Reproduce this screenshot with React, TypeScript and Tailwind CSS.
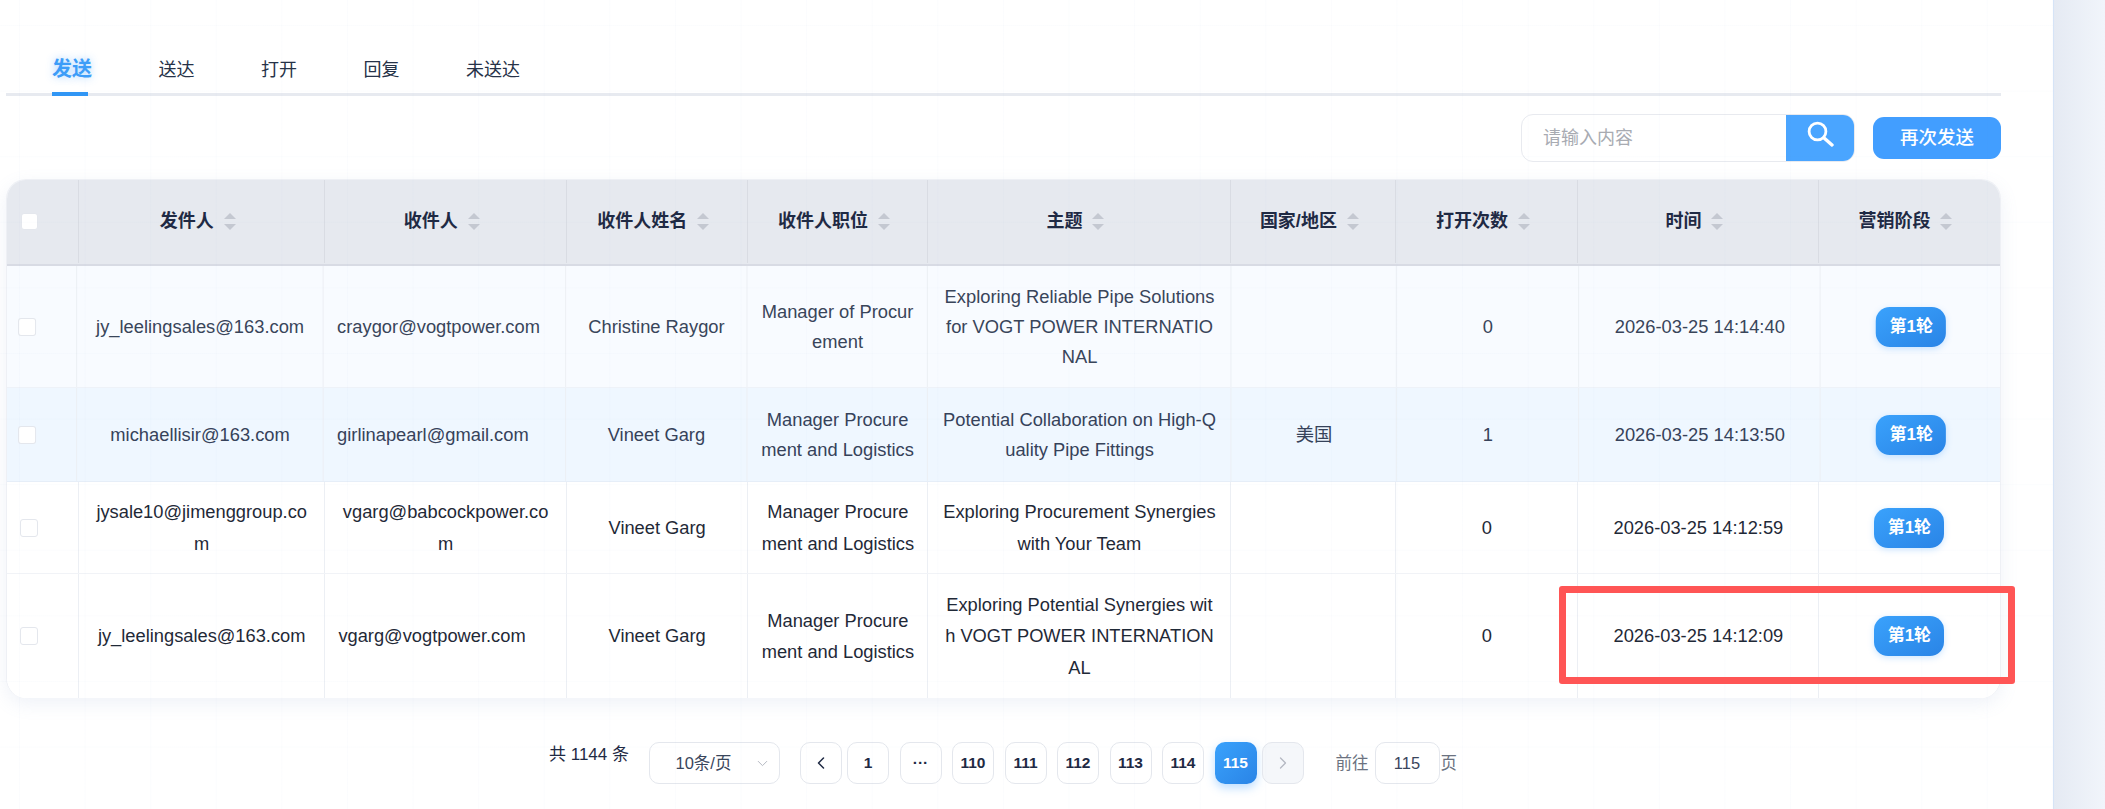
import type { ReactNode } from "react";
import { ChevronDown, ChevronLeft, ChevronRight } from "lucide-react";

const tabs = ["发送", "送达", "打开", "回复", "未送达"];

const columns = ["发件人", "收件人", "收件人姓名", "收件人职位", "主题", "国家/地区", "打开次数", "时间", "营销阶段"];

const gridCols = "grid grid-cols-[71px_246.4px_241.5px_181.5px_180px_303px_165px_182px_241px_181px]";

const rows = [
  {
    sender: "jy_leelingsales@163.com",
    to: "craygor@vogtpower.com",
    name: "Christine Raygor",
    title: "Manager of Procurement",
    subject: "Exploring Reliable Pipe Solutions for VOGT POWER INTERNATIONAL",
    country: "",
    opens: "0",
    time: "2026-03-25 14:14:40",
    cls: "h-[122px] leading-[30px] bg-[#f8fbff] text-[#39455a] scale-x-[1.002] border-b border-[#eef2f8]",
  },
  {
    sender: "michaellisir@163.com",
    to: "girlinapearl@gmail.com",
    name: "Vineet Garg",
    title: "Manager Procurement and Logistics",
    subject: "Potential Collaboration on High-Quality Pipe Fittings",
    country: "美国",
    opens: "1",
    time: "2026-03-25 14:13:50",
    cls: "h-[94px] leading-[30px] bg-[#eff7ff] text-[#36425a] scale-x-[1.002] border-b border-[#e6eef8]",
  },
  {
    sender: "jysale10@jimenggroup.com",
    to: "vgarg@babcockpower.com",
    name: "Vineet Garg",
    title: "Manager Procurement and Logistics",
    subject: "Exploring Procurement Synergies with Your Team",
    country: "",
    opens: "0",
    time: "2026-03-25 14:12:59",
    cls: "h-[92px] leading-[31.4px] bg-white text-[#1f2937] border-b border-[#f1f3f7]",
  },
  {
    sender: "jy_leelingsales@163.com",
    to: "vgarg@vogtpower.com",
    name: "Vineet Garg",
    title: "Manager Procurement and Logistics",
    subject: "Exploring Potential Synergies with VOGT POWER INTERNATIONAL",
    country: "",
    opens: "0",
    time: "2026-03-25 14:12:09",
    cls: "h-[124px] leading-[31.4px] bg-white text-[#1f2937]",
  },
];

const pagerBtn =
  "flex h-[42px] w-[42px] items-center justify-center rounded-[10px] border border-[#e4e7ed] bg-white text-[15.5px] font-bold text-[#1f2a44]";

const SortIcon = () => (
  <span className="ml-[10px] flex flex-col gap-[5px]">
    <span className="h-0 w-0 border-x-[6px] border-b-[6px] border-x-transparent border-b-[#c4c8d1]" />
    <span className="h-0 w-0 border-x-[6px] border-t-[6px] border-x-transparent border-t-[#c4c8d1]" />
  </span>
);

const Cell = ({ children, className = "justify-center px-[14px]" }: { children?: ReactNode; className?: string }) => (
  <div className={`flex items-center border-l border-[#eceff4] text-center break-all ${className}`}>
    <div>{children}</div>
  </div>
);

export default function App() {
  return (
    <div className="flex h-[809px] w-[2105px] overflow-hidden bg-white font-['Liberation_Sans','Noto_Sans_CJK_SC',sans-serif] text-[#1f2937]">
      <main className="relative h-full w-[2053px] pl-[6px] pr-[52px] pt-[48px]">
        {/* tabs */}
        <div className="flex h-[48px] items-start gap-[66.5px] border-b-[3px] border-[#e7eaf0] pl-[46px]">
          {tabs.map((t, i) =>
            i === 0 ? (
              <div
                key={t}
                className="relative mr-[4px] h-[45px] w-[36px] whitespace-nowrap pt-[7px] text-[20px] font-bold leading-[28px] text-[#3d9df8] [text-shadow:0_0_8px_rgba(64,158,255,0.45)]"
              >
                {t}
                <span className="absolute bottom-[-3px] left-0 h-[4px] w-[36px] bg-[#3096f5]" />
              </div>
            ) : (
              <div key={t} className="pt-[9px] text-[18px] leading-[26px] text-[#263248]">
                {t}
              </div>
            )
          )}
        </div>

        {/* toolbar */}
        <div className="mt-[18px] flex items-center justify-end">
          <div className="flex h-[48px] w-[334px] overflow-hidden rounded-[12px] border border-[#e8eaef] bg-white">
            <div className="flex-1 pl-[21px] text-[18px] leading-[46px] text-[#a8abb2]">请输入内容</div>
            <button className="flex w-[68px] items-center justify-center bg-[#4aa5ff] pb-[7px]">
              <svg width="27" height="27" viewBox="0 0 27 27" fill="none" stroke="white">
                <circle cx="10.5" cy="10.5" r="8.4" strokeWidth="2.8" />
                <path d="M16.8 16.8 L25 24" strokeWidth="3.4" strokeLinecap="round" />
              </svg>
            </button>
          </div>
          <button className="ml-[18px] h-[42px] w-[128px] rounded-[11px] bg-[#429eff] text-[18.5px] font-medium text-white">
            再次发送
          </button>
        </div>

        {/* table */}
        <div className="mt-[17px] overflow-hidden rounded-[20px] border-x border-t border-[#eef0f5] bg-white text-[18.3px] shadow-[0_6px_18px_rgba(120,150,200,0.12)]">
          <div className={`${gridCols} h-[86px] border-b-[2px] border-[#d8dbe4] bg-[#e6e9ef] pb-[1px]`}>
            <div className="flex items-center pl-[14px]">
              <span className="h-[17px] w-[17px] rounded-[3px] border border-[#e4e7ed] bg-white" />
            </div>
            {columns.map((c) => (
              <div key={c} className="flex items-center justify-center border-l border-[#d9dce3] pr-[8px]">
                <span className="whitespace-nowrap text-[18px] font-bold text-[#1f2a44]">{c}</span>
                <SortIcon />
              </div>
            ))}
          </div>
          {rows.map((r) => (
            <div key={r.time} className={`${gridCols} ${r.cls}`}>
              <div className="flex items-center pl-[13px]">
                <span className="h-[18px] w-[18px] rounded-[3px] border border-[#e4e7ed] bg-white" />
              </div>
              <Cell>{r.sender}</Cell>
              <Cell className="justify-start px-[13px]">{r.to}</Cell>
              <Cell>{r.name}</Cell>
              <Cell className="justify-center px-[12px]">{r.title}</Cell>
              <Cell className="justify-center px-[13.5px]">{r.subject}</Cell>
              <Cell>{r.country}</Cell>
              <Cell>{r.opens}</Cell>
              <Cell>{r.time}</Cell>
              <div className="flex items-center justify-center border-l border-[#eceff4]">
                <span className="flex h-[40px] w-[70px] items-center justify-center rounded-[14px] bg-linear-to-br from-[#3aa2fc] to-[#2a84e6] text-[17px] font-bold text-white shadow-[0_2px_6px_rgba(64,158,255,0.25)]">
                  第1轮
                </span>
              </div>
            </div>
          ))}
        </div>

        {/* pagination */}
        <div className="mt-[44px] flex items-start pl-[543px] text-[#1f2a44]">
          <span className="mt-[1px] w-[80px] whitespace-nowrap text-[17px] leading-[24px]">共 1144 条</span>
          <div className="ml-[19.5px] flex h-[42px] w-[131.5px] items-center justify-between rounded-[10px] border border-[#e4e7ed] pl-[26px] pr-[8px] text-[16.5px] text-[#3a465c]">
            10条/页
            <ChevronDown size={17} strokeWidth={1.4} className="text-[#b4b8c1]" />
          </div>
          <div className="ml-[20px] flex items-center">
            <div className={pagerBtn}>
              <ChevronLeft size={20} strokeWidth={1.8} />
            </div>
            <div className={`${pagerBtn} ml-[5px]`}>1</div>
            <div className={`${pagerBtn} ml-[10.5px]`}>···</div>
            {["110", "111", "112", "113", "114"].map((p) => (
              <div key={p} className={`${pagerBtn} ml-[10.5px]`}>
                {p}
              </div>
            ))}
            <div className="ml-[10.5px] flex h-[42px] w-[42px] items-center justify-center rounded-[10px] bg-linear-to-br from-[#3aa2fc] to-[#2a84e6] text-[15.5px] font-bold text-white shadow-[0_4px_10px_rgba(64,158,255,0.35)]">
              115
            </div>
            <div className={`${pagerBtn} ml-[5px] !bg-[#f5f7fa] !text-[#b4b8c1]`}>
              <ChevronRight size={20} strokeWidth={1.5} />
            </div>
          </div>
          <div className="ml-[32px] flex items-center text-[16.5px] text-[#6b7280]">
            前往
            <div className="ml-[6px] mr-[1px] flex h-[42px] w-[65px] items-center justify-center rounded-[10px] border border-[#e4e7ed] text-[#3a465c]">
              115
            </div>
            页
          </div>
        </div>

        {/* faint page grid */}
        <div className="pointer-events-none absolute inset-0 bg-[linear-gradient(rgba(70,120,200,0.02)_1px,transparent_1px),linear-gradient(90deg,rgba(70,120,200,0.02)_1px,transparent_1px)] bg-size-[65.6px_65.6px] bg-position-[19px_25px]" />

        {/* red annotation */}
        <div className="pointer-events-none absolute left-[1559px] top-[586px] h-[98px] w-[456px] rounded-[3px] border-[7px] border-[#ff5555]" />
      </main>
      <aside className="h-full flex-1 border-l border-[#d6e4f7] bg-linear-to-r from-[#e5eaf3] to-[#f1f5fb]" />
    </div>
  );
}
